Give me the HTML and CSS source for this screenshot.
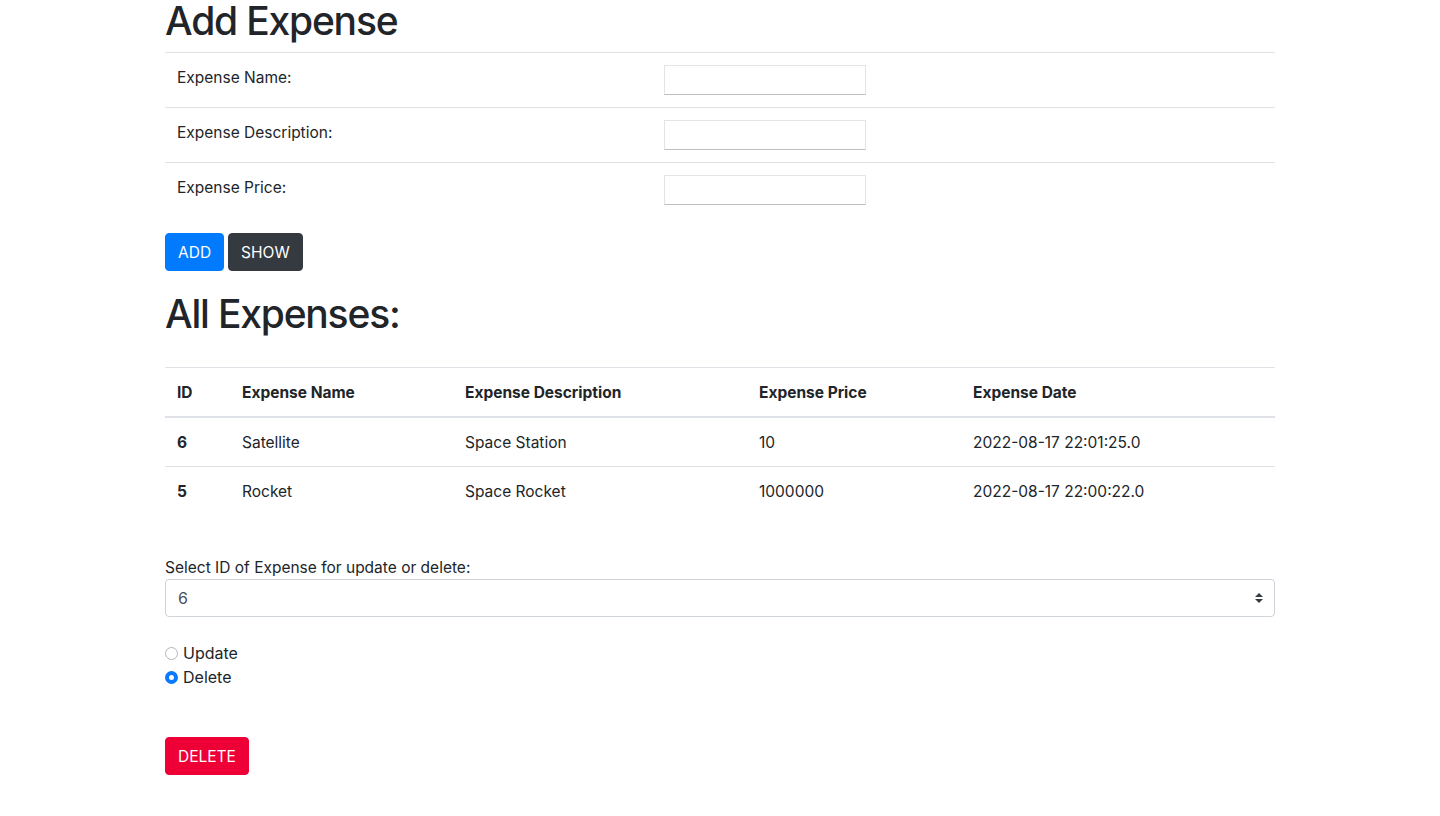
FILE: index.html
```html
<!DOCTYPE html>
<html lang="en">
<head>
<meta charset="utf-8">
<title>Expenses</title>
<link rel="stylesheet" href="styles.css">
</head>
<body>
<div class="container">
  <h1 class="title title-add">Add Expense</h1>
  <form class="add-form">
    <table class="table form-table">
      <colgroup><col class="c-label"><col class="c-input"></colgroup>
      <tbody>
        <tr><td>Expense Name:</td><td><input class="plain-input" type="text"></td></tr>
        <tr><td>Expense Description:</td><td><input class="plain-input" type="text"></td></tr>
        <tr><td>Expense Price:</td><td><input class="plain-input" type="text"></td></tr>
      </tbody>
    </table>
    <div class="btn-row">
      <button type="button" class="btn btn-primary">ADD</button>
      <button type="button" class="btn btn-dark">SHOW</button>
    </div>
  </form>

  <h1 class="title title-all">All Expenses:</h1>
  <table class="table data-table">
    <colgroup>
      <col class="c-id"><col class="c-name"><col class="c-desc"><col class="c-price"><col class="c-date">
    </colgroup>
    <thead>
      <tr><th>ID</th><th>Expense Name</th><th>Expense Description</th><th>Expense Price</th><th>Expense Date</th></tr>
    </thead>
    <tbody>
      <tr><th>6</th><td>Satellite</td><td>Space Station</td><td>10</td><td>2022-08-17 22:01:25.0</td></tr>
      <tr><th>5</th><td>Rocket</td><td>Space Rocket</td><td>1000000</td><td>2022-08-17 22:00:22.0</td></tr>
    </tbody>
  </table>

  <div class="select-block">
    <label class="select-label" for="sel">Select ID of Expense for update or delete:</label>
    <div class="select-wrap">
      <select id="sel" class="custom-select">
        <option>6</option>
        <option>5</option>
      </select>
      <svg class="select-arrow" width="8" height="10" viewBox="0 0 4 5"><path fill="#343a40" d="M2 0L0 2h4zm0 5L0 3h4z"/></svg>
    </div>
  </div>

  <div class="radios">
    <label class="radio-line"><input type="radio" name="act" class="radio"> Update</label>
    <label class="radio-line"><input type="radio" name="act" class="radio" checked> Delete</label>
  </div>

  <button type="button" class="btn btn-danger">DELETE</button>
</div>
</body>
</html>
```
FILE: styles.css
```css
* { box-sizing: border-box; }
html, body { margin: 0; padding: 0; background: #fff; }
body {
  font-family: Inter, "Liberation Sans", sans-serif;
  font-size: 15.5px;
  line-height: 24px;
  color: #212529;
}
.container {
  width: 1110px;
  margin: 0 auto;
}
.title {
  font-size: 39px;
  font-weight: 500;
  line-height: 40px;
  letter-spacing: -1.2px;
  margin: 0;
  padding-top: 1px;
}
.title-add { margin-bottom: 11px; }
.title-all { margin-top: 22px; margin-bottom: 33px; }

.table {
  width: 100%;
  border-collapse: collapse;
  table-layout: fixed;
}
.table td, .table th {
  padding: 13px 12px 11px;
  border-top: 1px solid #dee2e6;
  text-align: left;
  vertical-align: top;
  font-size: 15.5px;
  line-height: 24px;
}
.form-table td { padding: 12px; }
.form-table td:first-child { padding: 13px 12px 11px; }
.c-label { width: 487px; }
.c-input { width: 623px; }
.plain-input {
  display: block;
  width: 202px;
  height: 30px;
  border: 1px solid #e4e4e4;
  border-bottom-color: #bfbfbf;
  background: #fff;
  margin: 0;
  padding: 2px 4px;
  font: inherit;
  border-radius: 0;
}
.add-form { margin: 0; }
.btn-row { display: flex; gap: 4px; margin-top: 16px; }
.btn {
  display: inline-block;
  font-family: inherit;
  font-size: 15.5px;
  line-height: 24px;
  padding: 7px 12px 5px;
  border: 1px solid transparent;
  border-radius: 4px;
  color: #fff;
  cursor: pointer;
}
.btn-primary { background: #007bff; border-color: #007bff; }
.btn-dark { background: #343a40; border-color: #343a40; }
.btn-danger { background: #ee0037; border-color: #ee0037; margin-top: 48px; }

.data-table { margin-bottom: 16px; }
.data-table thead th {
  border-bottom: 2px solid #dee2e6;
  font-weight: 700;
}
.data-table tbody th { font-weight: 700; }
.c-id { width: 65px; }
.c-name { width: 223px; }
.c-desc { width: 294px; }
.c-price { width: 214px; }
.c-date { width: 314px; }

.select-block { padding-top: 24px; }
.select-label { display: block; line-height: 24px; padding-top: 1px; margin-bottom: -1px; }
.select-wrap { position: relative; }
.custom-select {
  display: block;
  width: 100%;
  height: 38px;
  padding: 6px 28px 6px 12px;
  font-family: inherit;
  font-size: 16px;
  line-height: 24px;
  color: #495057;
  background: #fff;
  border: 1px solid #ced4da;
  border-radius: 4px;
  appearance: none;
  -webkit-appearance: none;
}
.select-arrow { position: absolute; right: 12px; top: 14px; pointer-events: none; }

.radios { padding-top: 24px; display: flex; flex-direction: column; }
.radio-line { display: flex; align-items: center; line-height: 24px; font-size: 16px; gap: 5px; }
.radio {
  appearance: none;
  -webkit-appearance: none;
  width: 13px;
  height: 13px;
  margin: 0;
  border-radius: 50%;
  border: 1px solid #b5b5b5;
  background: #fff;
}
.radio:checked {
  border: 4px solid #0a79fe;
  background: #fff;
}
```
